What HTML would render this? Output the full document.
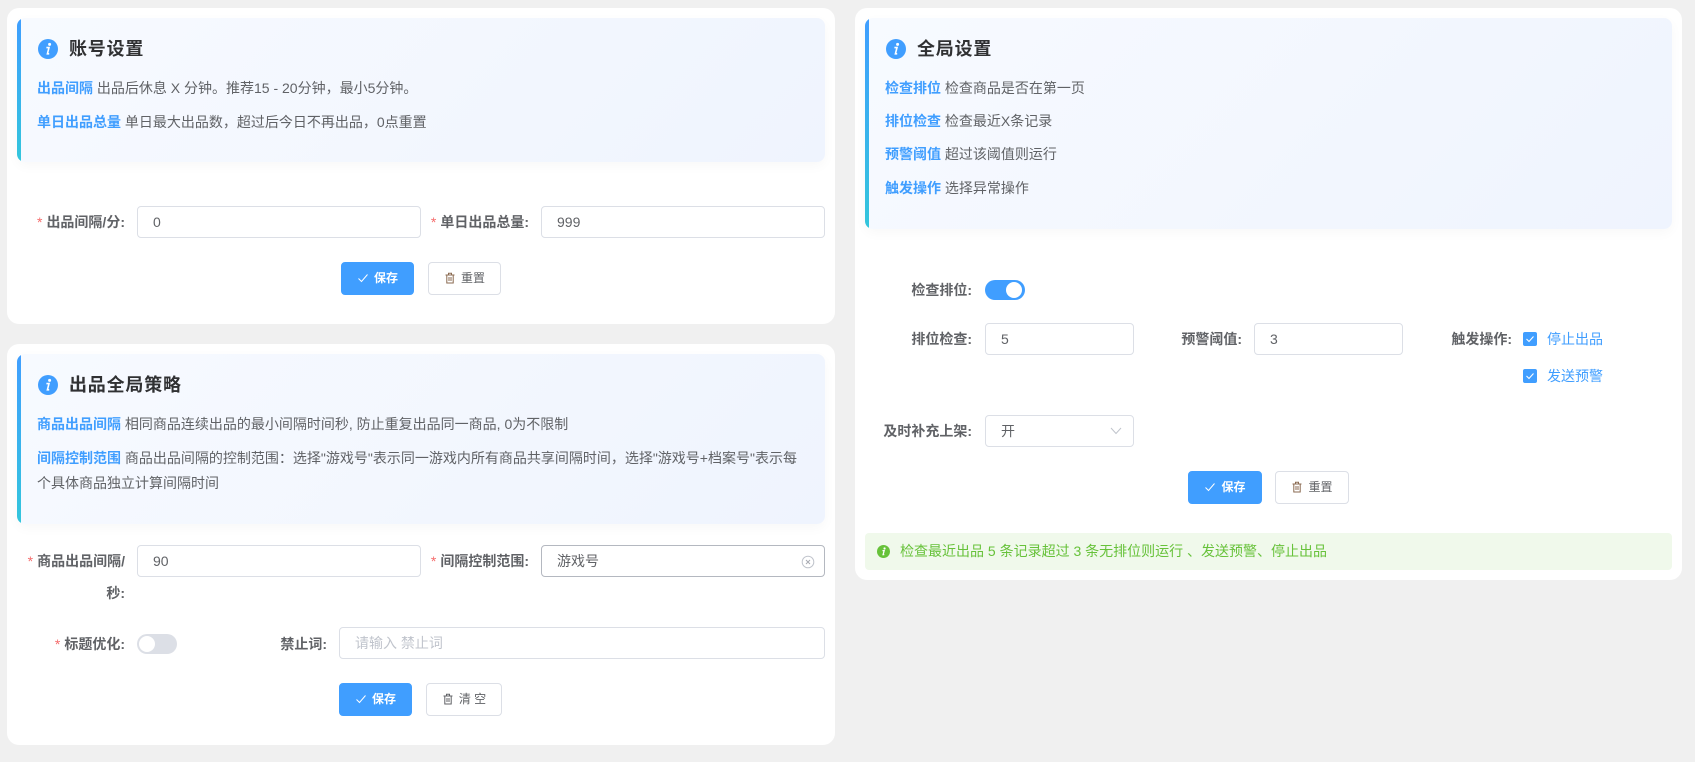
<!DOCTYPE html>
<html lang="zh-CN">
<head>
<meta charset="utf-8">
<title>设置</title>
<style>
html,body{margin:0;padding:0;}
body{width:1695px;height:762px;background:#f0f0f0;position:relative;overflow:hidden;font-family:"Liberation Sans","Noto Sans CJK SC",sans-serif;font-size:14px;color:#606266;}
div,span{box-sizing:border-box;}
.a{position:absolute;white-space:nowrap;}
.card{position:absolute;background:#fff;border-radius:12px;}
.banner{position:absolute;border-radius:8px;background:linear-gradient(135deg,#f7faff,#eff4fe);box-shadow:0 4px 12px rgba(0,0,0,.03);overflow:hidden;}
.banner:before{content:"";position:absolute;left:0;top:0;bottom:0;width:4px;background:linear-gradient(180deg,#409eff,#33c6dc);}
.title{position:absolute;white-space:nowrap;font-size:18px;font-weight:700;color:#303133;line-height:24px;letter-spacing:.8px;}
.t{position:absolute;white-space:nowrap;line-height:20px;color:#606266;font-size:14px;}
.t b{font-weight:700;color:#409eff;}
.lb{position:absolute;white-space:nowrap;line-height:20px;font-weight:700;color:#606266;font-size:14px;text-align:right;}
.lb i{font-style:normal;font-weight:400;color:#f56c6c;margin-right:4px;}
.inp{position:absolute;height:32px;background:#fff;border:1px solid #dcdfe6;border-radius:4px;line-height:30px;padding-left:15px;color:#606266;font-size:14px;}
.btn{position:absolute;height:33px;border-radius:4px;line-height:31px;font-size:12px;font-weight:700;text-align:center;white-space:nowrap;}
.pri{background:#409eff;border:1px solid #409eff;color:#fff;}
.def{background:#fff;border:1px solid #dcdfe6;color:#606266;font-weight:400;}
.btn svg{vertical-align:-2px;margin-right:5px;}
.sw{position:absolute;width:40px;height:20px;border-radius:10px;}
.ck{position:absolute;width:14px;height:14px;background:#409eff;border-radius:2px;}
</style>
</head>
<body>

<!-- Card 1 -->
<div class="card" style="left:7px;top:8px;width:828px;height:316px;"></div>
<div class="banner" style="left:17px;top:18px;width:808px;height:144px;"></div>
<svg class="a" style="left:38px;top:39px;" width="20" height="20" viewBox="0 0 20 20"><circle cx="10" cy="10" r="10" fill="#409eff"/><circle cx="11.6" cy="5.4" r="1.5" fill="#fff"/><path d="M8.4 8.6h2.6l-1.6 6.2h1.8" stroke="#fff" stroke-width="1.6" fill="none"/></svg>
<div class="title" style="left:69px;top:37px;">账号设置</div>
<div class="t" style="left:37px;top:78px;"><b>出品间隔</b> 出品后休息 X 分钟。推荐15 - 20分钟，最小5分钟。</div>
<div class="t" style="left:37px;top:112px;"><b>单日出品总量</b> 单日最大出品数，超过后今日不再出品，0点重置</div>

<div class="lb" style="right:1570px;top:212px;"><i>*</i>出品间隔/分:</div>
<div class="inp" style="left:137px;top:206px;width:284px;">0</div>
<div class="lb" style="right:1166px;top:212px;"><i>*</i>单日出品总量:</div>
<div class="inp" style="left:541px;top:206px;width:284px;">999</div>
<div class="btn pri" style="left:341px;top:262px;width:73px;"><svg width="12" height="12" viewBox="0 0 12 12"><path d="M1.5 6.5l3 3 6-7" stroke="#fff" fill="none" stroke-width="1"/></svg>保存</div>
<div class="btn def" style="left:428px;top:262px;width:73px;"><svg width="12" height="12" viewBox="0 0 12 12"><path d="M1.5 3h9M4.5 3V1.2h3V3M2.8 3v8h6.4V3M5 5v4M7 5v4" stroke="#8a6a50" fill="none" stroke-width="1"/></svg>重置</div>

<!-- Card 2 -->
<div class="card" style="left:7px;top:344px;width:828px;height:401px;"></div>
<div class="banner" style="left:17px;top:354px;width:808px;height:170px;"></div>
<svg class="a" style="left:38px;top:375px;" width="20" height="20" viewBox="0 0 20 20"><circle cx="10" cy="10" r="10" fill="#409eff"/><circle cx="11.6" cy="5.4" r="1.5" fill="#fff"/><path d="M8.4 8.6h2.6l-1.6 6.2h1.8" stroke="#fff" stroke-width="1.6" fill="none"/></svg>
<div class="title" style="left:69px;top:373px;">出品全局策略</div>
<div class="t" style="left:37px;top:414px;"><b>商品出品间隔</b> 相同商品连续出品的最小间隔时间秒, 防止重复出品同一商品, 0为不限制</div>
<div class="t" style="left:37px;top:448px;"><b>间隔控制范围</b> 商品出品间隔的控制范围：选择"游戏号"表示同一游戏内所有商品共享间隔时间，选择"游戏号+档案号"表示每</div>
<div class="t" style="left:37px;top:473px;">个具体商品独立计算间隔时间</div>

<div class="lb" style="right:1570px;top:551px;"><i>*</i>商品出品间隔/</div>
<div class="lb" style="right:1570px;top:583px;">秒:</div>
<div class="inp" style="left:137px;top:545px;width:284px;">90</div>
<div class="lb" style="right:1166px;top:551px;"><i>*</i>间隔控制范围:</div>
<div class="inp" style="left:541px;top:545px;width:284px;border-color:#b4b8c0;">游戏号</div>
<svg class="a" style="left:801px;top:555px;" width="14" height="14" viewBox="0 0 14 14"><circle cx="7" cy="7" r="5.8" fill="none" stroke="#c0c4cc" stroke-width="1"/><path d="M5 5l4 4M9 5l-4 4" stroke="#a8abb2" stroke-width="1"/></svg>

<div class="lb" style="right:1570px;top:634px;"><i>*</i>标题优化:</div>
<div class="sw" style="left:137px;top:634px;background:#dcdfe6;"></div>
<div class="a" style="left:139px;top:636px;width:16px;height:16px;border-radius:50%;background:#fff;"></div>
<div class="lb" style="right:1368px;top:634px;">禁止词:</div>
<div class="inp" style="left:339px;top:627px;width:486px;color:#c0c4cc;">请输入 禁止词</div>
<div class="btn pri" style="left:339px;top:683px;width:73px;"><svg width="12" height="12" viewBox="0 0 12 12"><path d="M1.5 6.5l3 3 6-7" stroke="#fff" fill="none" stroke-width="1"/></svg>保存</div>
<div class="btn def" style="left:426px;top:683px;width:76px;"><svg width="12" height="12" viewBox="0 0 12 12"><path d="M1.5 3h9M4.5 3V1.2h3V3M2.8 3v8h6.4V3M5 5v4M7 5v4" stroke="#606266" fill="none" stroke-width="1"/></svg>清 空</div>

<!-- Card 3 -->
<div class="card" style="left:855px;top:8px;width:827px;height:572px;"></div>
<div class="banner" style="left:865px;top:18px;width:807px;height:211px;"></div>
<svg class="a" style="left:886px;top:39px;" width="20" height="20" viewBox="0 0 20 20"><circle cx="10" cy="10" r="10" fill="#409eff"/><circle cx="11.6" cy="5.4" r="1.5" fill="#fff"/><path d="M8.4 8.6h2.6l-1.6 6.2h1.8" stroke="#fff" stroke-width="1.6" fill="none"/></svg>
<div class="title" style="left:917px;top:37px;">全局设置</div>
<div class="t" style="left:885px;top:78px;"><b>检查排位</b> 检查商品是否在第一页</div>
<div class="t" style="left:885px;top:111px;"><b>排位检查</b> 检查最近X条记录</div>
<div class="t" style="left:885px;top:144px;"><b>预警阈值</b> 超过该阈值则运行</div>
<div class="t" style="left:885px;top:178px;"><b>触发操作</b> 选择异常操作</div>

<div class="lb" style="right:723px;top:280px;">检查排位:</div>
<div class="sw" style="left:985px;top:280px;background:#409eff;"></div>
<div class="a" style="left:1006px;top:282px;width:16px;height:16px;border-radius:50%;background:#fff;"></div>

<div class="lb" style="right:723px;top:329px;">排位检查:</div>
<div class="inp" style="left:985px;top:323px;width:149px;">5</div>
<div class="lb" style="right:453px;top:329px;">预警阈值:</div>
<div class="inp" style="left:1254px;top:323px;width:149px;">3</div>
<div class="lb" style="right:183px;top:329px;">触发操作:</div>
<div class="ck" style="left:1523px;top:332px;"><svg style="display:block" width="14" height="14" viewBox="0 0 14 14"><path d="M3.5 7l2.5 2.5 4.5-5" stroke="#fff" fill="none" stroke-width="1.1"/></svg></div>
<div class="t" style="left:1547px;top:329px;color:#409eff;">停止出品</div>
<div class="ck" style="left:1523px;top:369px;"><svg style="display:block" width="14" height="14" viewBox="0 0 14 14"><path d="M3.5 7l2.5 2.5 4.5-5" stroke="#fff" fill="none" stroke-width="1.1"/></svg></div>
<div class="t" style="left:1547px;top:366px;color:#409eff;">发送预警</div>

<div class="lb" style="right:723px;top:421px;">及时补充上架:</div>
<div class="inp" style="left:985px;top:415px;width:149px;">开</div>
<svg class="a" style="left:1110px;top:426px;" width="12" height="10" viewBox="0 0 12 10"><path d="M1 2l5 5.5L11 2" stroke="#c0c4cc" fill="none" stroke-width="1"/></svg>

<div class="btn pri" style="left:1188px;top:471px;width:74px;"><svg width="12" height="12" viewBox="0 0 12 12"><path d="M1.5 6.5l3 3 6-7" stroke="#fff" fill="none" stroke-width="1"/></svg>保存</div>
<div class="btn def" style="left:1275px;top:471px;width:74px;"><svg width="12" height="12" viewBox="0 0 12 12"><path d="M1.5 3h9M4.5 3V1.2h3V3M2.8 3v8h6.4V3M5 5v4M7 5v4" stroke="#8a6a50" fill="none" stroke-width="1"/></svg>重置</div>

<div class="a" style="left:865px;top:533px;width:807px;height:37px;background:#f0f9eb;border-radius:4px;"></div>
<svg class="a" style="left:877px;top:545px;" width="13" height="13" viewBox="0 0 20 20"><circle cx="10" cy="10" r="10" fill="#67c23a"/><circle cx="11.6" cy="5.4" r="1.7" fill="#fff"/><path d="M8.4 8.6h2.6l-1.6 6.2h1.8" stroke="#fff" stroke-width="2" fill="none"/></svg>
<div class="t" style="left:900px;top:541px;color:#67c23a;">检查最近出品 5 条记录超过 3 条无排位则运行 、发送预警、停止出品</div>

</body>
</html>
